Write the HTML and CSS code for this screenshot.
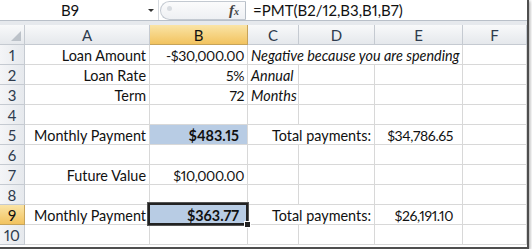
FILE: index.html
```html
<!DOCTYPE html>
<html lang="en">
<head>
    <meta charset="UTF-8">
    <title>Loan Payment Sheet</title>
    <link rel="stylesheet" href="styles.css">
</head>
<body>

<div class="window">
    <!-- Name box + formula bar -->
    <div class="formula-bar">
        <div class="name-box">
            <span class="name">B9</span>
            <span class="arrow"></span>
        </div>
        <div class="fx-area">
            <span class="grip"></span>
            <span class="fx"><i>f</i><small>x</small></span>
        </div>
        <div class="formula">=PMT(B2/12,B3,B1,B7)</div>
    </div>
    <div class="bar-gap"></div>

    <!-- Worksheet grid -->
    <div class="sheet">
        <div class="hdr corner"></div>
        <div class="hdr">A</div>
        <div class="hdr active">B</div>
        <div class="hdr">C</div>
        <div class="hdr">D</div>
        <div class="hdr">E</div>
        <div class="hdr">F</div>

        <div class="hdr row">1</div>
        <div class="cell num">Loan Amount</div>
        <div class="cell num val">-$30,000.00</div>
        <div class="cell note span3">Negative because you are spending</div>
        <div class="cell"></div>

        <div class="hdr row">2</div>
        <div class="cell num">Loan Rate</div>
        <div class="cell num val">5%</div>
        <div class="cell note">Annual</div>
        <div class="cell"></div>
        <div class="cell"></div>
        <div class="cell"></div>

        <div class="hdr row">3</div>
        <div class="cell num">Term</div>
        <div class="cell num val">72</div>
        <div class="cell note">Months</div>
        <div class="cell"></div>
        <div class="cell"></div>
        <div class="cell"></div>

        <div class="hdr row">4</div>
        <div class="cell"></div>
        <div class="cell"></div>
        <div class="cell"></div>
        <div class="cell"></div>
        <div class="cell"></div>
        <div class="cell"></div>

        <div class="hdr row">5</div>
        <div class="cell num">Monthly Payment</div>
        <div class="cell num result">$483.15</div>
        <div class="cell num span2">Total payments:</div>
        <div class="cell num val money">$34,786.65</div>
        <div class="cell"></div>

        <div class="hdr row">6</div>
        <div class="cell"></div>
        <div class="cell"></div>
        <div class="cell"></div>
        <div class="cell"></div>
        <div class="cell"></div>
        <div class="cell"></div>

        <div class="hdr row">7</div>
        <div class="cell num">Future Value</div>
        <div class="cell num val">$10,000.00</div>
        <div class="cell"></div>
        <div class="cell"></div>
        <div class="cell"></div>
        <div class="cell"></div>

        <div class="hdr row">8</div>
        <div class="cell"></div>
        <div class="cell"></div>
        <div class="cell"></div>
        <div class="cell"></div>
        <div class="cell"></div>
        <div class="cell"></div>

        <div class="hdr row active">9</div>
        <div class="cell num">Monthly Payment</div>
        <div class="cell num result selected">$363.77</div>
        <div class="cell num span2">Total payments:</div>
        <div class="cell num val money">$26,191.10</div>
        <div class="cell"></div>

        <div class="hdr row">10</div>
        <div class="cell"></div>
        <div class="cell"></div>
        <div class="cell"></div>
        <div class="cell"></div>
        <div class="cell"></div>
        <div class="cell"></div>
    </div>
</div>

</body>
</html>
```

FILE: styles.css
```css
body {
    margin: 0;
    padding: 0;
    background: #fff;
    font-family: 'Lato', 'Open Sans', sans-serif;
    font-size: 14.4px;
    font-variant-numeric: proportional-nums;
    color: #111;
}
.window {
    width: 527px;
    height: 247px;
    overflow: hidden;
    background: #fff;
    border-right: 2px solid #4e4e4e;
    border-bottom: 2px solid #4e4e4e;
    box-shadow: 1px 1px 3px rgba(0, 0, 0, 0.35);
}

/* Formula bar */
.formula-bar {
    display: flex;
    height: 21px;
    border-bottom: 1px solid #b9c0c9;
    box-sizing: border-box;
}
.name-box {
    width: 159px;
    display: flex;
    align-items: center;
    border-right: 1px solid #d5d9de;
    box-sizing: border-box;
}
.name {
    width: 140px;
    text-align: center;
    line-height: 20px;
    font-size: 15px;
}
.arrow {
    width: 0;
    height: 0;
    margin-left: 8px;
    border-left: 3px solid transparent;
    border-right: 3px solid transparent;
    border-top: 3px solid #333;
}
.fx-area {
    width: 86px;
    display: flex;
    align-items: center;
    justify-content: space-between;
    padding: 0 6px;
    box-sizing: border-box;
    background: linear-gradient(#fbfbfc, #eef0f3);
    border-radius: 10px 0 0 10px;
    border: 1px solid #c3c9d1;
    border-right: 1px solid #b6bdc6;
    margin: 1px 0 0 1px;
    height: 19px;
}
.grip {
    width: 5px;
    height: 5px;
    border-radius: 50%;
    background: #d8dce1;
    margin-bottom: 4px;
}
.fx {
    font-family: 'Liberation Serif', serif;
    font-weight: bold;
    color: #444;
    font-size: 15px;
    line-height: 15px;
}
.fx small {
    font-size: 10px;
    font-style: italic;
}
.formula {
    flex: 1;
    padding-left: 7px;
    line-height: 20px;
    font-size: 15px;
}
.bar-gap {
    height: 4px;
    background: #e6e9ed;
}

/* Grid */
.sheet {
    display: grid;
    grid-template-columns: 25px 125px 98px 51px 76px 88px 1fr;
    grid-template-rows: 20px;
    grid-auto-rows: 20px;
}
.cell, .hdr {
    box-sizing: border-box;
    border-right: 1px solid #d8d8d8;
    border-bottom: 1px solid #d8d8d8;
    line-height: 19px;
    padding: 1px 3px 0;
    white-space: nowrap;
}
.hdr {
    text-align: center;
    color: #2e3b4d;
    background: linear-gradient(#f8f9fa, #e5e8ec);
    border-color: #c5cad1;
    font-size: 15px;
}
.hdr.row {
    background: linear-gradient(to right, #f4f5f7, #e6e9ed);
}
.hdr.active {
    background: linear-gradient(#fae4a6, #f2c35f);
    border-color: #c6a35a;
    color: #111;
}
.corner {
    position: relative;
}
.corner::after {
    content: '';
    position: absolute;
    right: 3px;
    bottom: 3px;
    border-left: 10px solid transparent;
    border-bottom: 10px solid #bcc2c9;
}
.num {
    text-align: right;
}
.val {
    font-size: 14px;
    letter-spacing: -0.4px;
}
.note {
    font-style: italic;
}
.span3 {
    grid-column: span 3;
}
.span2 {
    grid-column: span 2;
}
.val.money {
    padding-right: 9px;
}
.result {
    background: #b8cce4;
    font-weight: bold;
    padding-right: 8px;
}
.selected {
    position: relative;
}
.selected::before {
    content: '';
    position: absolute;
    left: -2px;
    top: -2px;
    right: -1px;
    bottom: -1px;
    border: 2px solid #222;
    outline: 1px solid #555;
}
.selected::after {
    content: '';
    position: absolute;
    right: -4px;
    bottom: -4px;
    width: 5px;
    height: 5px;
    background: #222;
    border: 1px solid #fff;
}
```
